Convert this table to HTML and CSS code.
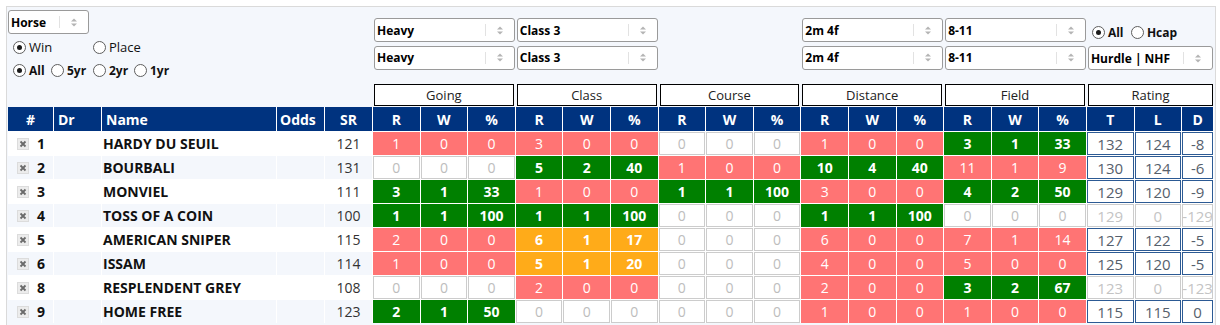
FILE: index.html
```html
<!DOCTYPE html>
<html>
<head>
<meta charset="utf-8">
<link rel="stylesheet" href="styles.css">
</head>
<body>
<div class="panel">
  <div class="top">
    <div class="left">
      <div class="sel sel-horse"><span class="sel-t">Horse</span><span class="sel-arr"><svg width="6" height="9" viewBox="0 0 6 9"><polygon points="0,3.5 3,0.5 6,3.5" /><polygon points="0,5.5 3,8.5 6,5.5" /></svg></span></div>
      <div class="opt-row">
        <label class="opt opt-win"><span class="rb on"></span>Win</label>
        <label class="opt"><span class="rb"></span>Place</label>
      </div>
      <div class="opt-row small">
        <label class="opt w38"><span class="rb on"></span>All</label>
        <label class="opt w42"><span class="rb"></span>5yr</label>
        <label class="opt w41"><span class="rb"></span>2yr</label>
        <label class="opt"><span class="rb"></span>1yr</label>
      </div>
    </div>

    <div class="fgroup col-going">
      <div class="sel"><span class="sel-t">Heavy</span><span class="sel-arr"><svg width="6" height="9" viewBox="0 0 6 9"><polygon points="0,3.5 3,0.5 6,3.5" /><polygon points="0,5.5 3,8.5 6,5.5" /></svg></span></div>
      <div class="sel"><span class="sel-t">Heavy</span><span class="sel-arr"><svg width="6" height="9" viewBox="0 0 6 9"><polygon points="0,3.5 3,0.5 6,3.5" /><polygon points="0,5.5 3,8.5 6,5.5" /></svg></span></div>
    </div>
    <div class="fgroup col-class">
      <div class="sel"><span class="sel-t">Class 3</span><span class="sel-arr"><svg width="6" height="9" viewBox="0 0 6 9"><polygon points="0,3.5 3,0.5 6,3.5" /><polygon points="0,5.5 3,8.5 6,5.5" /></svg></span></div>
      <div class="sel"><span class="sel-t">Class 3</span><span class="sel-arr"><svg width="6" height="9" viewBox="0 0 6 9"><polygon points="0,3.5 3,0.5 6,3.5" /><polygon points="0,5.5 3,8.5 6,5.5" /></svg></span></div>
    </div>
    <div class="fgroup col-dist">
      <div class="sel"><span class="sel-t">2m 4f</span><span class="sel-arr"><svg width="6" height="9" viewBox="0 0 6 9"><polygon points="0,3.5 3,0.5 6,3.5" /><polygon points="0,5.5 3,8.5 6,5.5" /></svg></span></div>
      <div class="sel"><span class="sel-t">2m 4f</span><span class="sel-arr"><svg width="6" height="9" viewBox="0 0 6 9"><polygon points="0,3.5 3,0.5 6,3.5" /><polygon points="0,5.5 3,8.5 6,5.5" /></svg></span></div>
    </div>
    <div class="fgroup col-field">
      <div class="sel"><span class="sel-t">8-11</span><span class="sel-arr"><svg width="6" height="9" viewBox="0 0 6 9"><polygon points="0,3.5 3,0.5 6,3.5" /><polygon points="0,5.5 3,8.5 6,5.5" /></svg></span></div>
      <div class="sel"><span class="sel-t">8-11</span><span class="sel-arr"><svg width="6" height="9" viewBox="0 0 6 9"><polygon points="0,3.5 3,0.5 6,3.5" /><polygon points="0,5.5 3,8.5 6,5.5" /></svg></span></div>
    </div>
    <div class="fgroup col-rating">
      <div class="opt-row small rating-opts">
        <label class="opt w39"><span class="rb on"></span>All</label>
        <label class="opt"><span class="rb"></span>Hcap</label>
      </div>
      <div class="sel"><span class="sel-t">Hurdle | NHF</span><span class="sel-arr"><svg width="6" height="9" viewBox="0 0 6 9"><polygon points="0,3.5 3,0.5 6,3.5" /><polygon points="0,5.5 3,8.5 6,5.5" /></svg></span></div>
    </div>

    <div class="gbox col-going">Going</div>
    <div class="gbox col-class">Class</div>
    <div class="gbox col-course">Course</div>
    <div class="gbox col-dist">Distance</div>
    <div class="gbox col-field">Field</div>
    <div class="gbox col-rating last">Rating</div>
  </div>

  <div class="grid">
    <div class="h">#</div><div class="h l">Dr</div><div class="h l">Name</div><div class="h l odds">Odds</div><div class="h">SR</div>
    <div class="h">R</div><div class="h">W</div><div class="h">%</div>
    <div class="h">R</div><div class="h">W</div><div class="h">%</div>
    <div class="h">R</div><div class="h">W</div><div class="h">%</div>
    <div class="h">R</div><div class="h">W</div><div class="h">%</div>
    <div class="h">R</div><div class="h">W</div><div class="h">%</div>
    <div class="h">T</div><div class="h">L</div><div class="h">D</div>

    <!-- row 1 -->
    <div class="c num"><span class="xi"><svg width="12" height="12" viewBox="0 0 12 12"><rect x="0.5" y="0.5" width="11" height="11" fill="#ececec" stroke="#dcdcdc"/><path d="M3.5 3.5 L8.5 8.5 M8.5 3.5 L3.5 8.5" stroke="#6a6a6a" stroke-width="1.8"/></svg></span>1</div>
    <div class="c"></div><div class="c name">HARDY DU SEUIL</div><div class="c"></div><div class="c sr">121</div>
    <div class="c p">1</div><div class="c p">0</div><div class="c p">0</div>
    <div class="c p">3</div><div class="c p">0</div><div class="c p">0</div>
    <div class="c z">0</div><div class="c z">0</div><div class="c z">0</div>
    <div class="c p">1</div><div class="c p">0</div><div class="c p">0</div>
    <div class="c g">3</div><div class="c g">1</div><div class="c g">33</div>
    <div class="c rt">132</div><div class="c rt">124</div><div class="c rt">-8</div>

    <!-- row 2 -->
    <div class="c num alt"><span class="xi"><svg width="12" height="12" viewBox="0 0 12 12"><rect x="0.5" y="0.5" width="11" height="11" fill="#ececec" stroke="#dcdcdc"/><path d="M3.5 3.5 L8.5 8.5 M8.5 3.5 L3.5 8.5" stroke="#6a6a6a" stroke-width="1.8"/></svg></span>2</div>
    <div class="c alt"></div><div class="c name alt">BOURBALI</div><div class="c alt"></div><div class="c sr alt">131</div>
    <div class="c z">0</div><div class="c z">0</div><div class="c z">0</div>
    <div class="c g">5</div><div class="c g">2</div><div class="c g">40</div>
    <div class="c p">1</div><div class="c p">0</div><div class="c p">0</div>
    <div class="c g">10</div><div class="c g">4</div><div class="c g">40</div>
    <div class="c p">11</div><div class="c p">1</div><div class="c p">9</div>
    <div class="c rt">130</div><div class="c rt">124</div><div class="c rt">-6</div>

    <!-- row 3 -->
    <div class="c num"><span class="xi"><svg width="12" height="12" viewBox="0 0 12 12"><rect x="0.5" y="0.5" width="11" height="11" fill="#ececec" stroke="#dcdcdc"/><path d="M3.5 3.5 L8.5 8.5 M8.5 3.5 L3.5 8.5" stroke="#6a6a6a" stroke-width="1.8"/></svg></span>3</div>
    <div class="c"></div><div class="c name">MONVIEL</div><div class="c"></div><div class="c sr">111</div>
    <div class="c g">3</div><div class="c g">1</div><div class="c g">33</div>
    <div class="c p">1</div><div class="c p">0</div><div class="c p">0</div>
    <div class="c g">1</div><div class="c g">1</div><div class="c g">100</div>
    <div class="c p">3</div><div class="c p">0</div><div class="c p">0</div>
    <div class="c g">4</div><div class="c g">2</div><div class="c g">50</div>
    <div class="c rt">129</div><div class="c rt">120</div><div class="c rt">-9</div>

    <!-- row 4 -->
    <div class="c num alt"><span class="xi"><svg width="12" height="12" viewBox="0 0 12 12"><rect x="0.5" y="0.5" width="11" height="11" fill="#ececec" stroke="#dcdcdc"/><path d="M3.5 3.5 L8.5 8.5 M8.5 3.5 L3.5 8.5" stroke="#6a6a6a" stroke-width="1.8"/></svg></span>4</div>
    <div class="c alt"></div><div class="c name alt">TOSS OF A COIN</div><div class="c alt"></div><div class="c sr alt">100</div>
    <div class="c g">1</div><div class="c g">1</div><div class="c g">100</div>
    <div class="c g">1</div><div class="c g">1</div><div class="c g">100</div>
    <div class="c z">0</div><div class="c z">0</div><div class="c z">0</div>
    <div class="c g">1</div><div class="c g">1</div><div class="c g">100</div>
    <div class="c z">0</div><div class="c z">0</div><div class="c z">0</div>
    <div class="c rg">129</div><div class="c rg">0</div><div class="c rg">-129</div>

    <!-- row 5 -->
    <div class="c num"><span class="xi"><svg width="12" height="12" viewBox="0 0 12 12"><rect x="0.5" y="0.5" width="11" height="11" fill="#ececec" stroke="#dcdcdc"/><path d="M3.5 3.5 L8.5 8.5 M8.5 3.5 L3.5 8.5" stroke="#6a6a6a" stroke-width="1.8"/></svg></span>5</div>
    <div class="c"></div><div class="c name">AMERICAN SNIPER</div><div class="c"></div><div class="c sr">115</div>
    <div class="c p">2</div><div class="c p">0</div><div class="c p">0</div>
    <div class="c o">6</div><div class="c o">1</div><div class="c o">17</div>
    <div class="c z">0</div><div class="c z">0</div><div class="c z">0</div>
    <div class="c p">6</div><div class="c p">0</div><div class="c p">0</div>
    <div class="c p">7</div><div class="c p">1</div><div class="c p">14</div>
    <div class="c rt">127</div><div class="c rt">122</div><div class="c rt">-5</div>

    <!-- row 6 -->
    <div class="c num alt"><span class="xi"><svg width="12" height="12" viewBox="0 0 12 12"><rect x="0.5" y="0.5" width="11" height="11" fill="#ececec" stroke="#dcdcdc"/><path d="M3.5 3.5 L8.5 8.5 M8.5 3.5 L3.5 8.5" stroke="#6a6a6a" stroke-width="1.8"/></svg></span>6</div>
    <div class="c alt"></div><div class="c name alt">ISSAM</div><div class="c alt"></div><div class="c sr alt">114</div>
    <div class="c p">1</div><div class="c p">0</div><div class="c p">0</div>
    <div class="c o">5</div><div class="c o">1</div><div class="c o">20</div>
    <div class="c z">0</div><div class="c z">0</div><div class="c z">0</div>
    <div class="c p">4</div><div class="c p">0</div><div class="c p">0</div>
    <div class="c p">5</div><div class="c p">0</div><div class="c p">0</div>
    <div class="c rt">125</div><div class="c rt">120</div><div class="c rt">-5</div>

    <!-- row 7 -->
    <div class="c num"><span class="xi"><svg width="12" height="12" viewBox="0 0 12 12"><rect x="0.5" y="0.5" width="11" height="11" fill="#ececec" stroke="#dcdcdc"/><path d="M3.5 3.5 L8.5 8.5 M8.5 3.5 L3.5 8.5" stroke="#6a6a6a" stroke-width="1.8"/></svg></span>8</div>
    <div class="c"></div><div class="c name">RESPLENDENT GREY</div><div class="c"></div><div class="c sr">108</div>
    <div class="c z">0</div><div class="c z">0</div><div class="c z">0</div>
    <div class="c p">2</div><div class="c p">0</div><div class="c p">0</div>
    <div class="c z">0</div><div class="c z">0</div><div class="c z">0</div>
    <div class="c p">2</div><div class="c p">0</div><div class="c p">0</div>
    <div class="c g">3</div><div class="c g">2</div><div class="c g">67</div>
    <div class="c rg">123</div><div class="c rg">0</div><div class="c rg">-123</div>

    <!-- row 8 -->
    <div class="c num alt"><span class="xi"><svg width="12" height="12" viewBox="0 0 12 12"><rect x="0.5" y="0.5" width="11" height="11" fill="#ececec" stroke="#dcdcdc"/><path d="M3.5 3.5 L8.5 8.5 M8.5 3.5 L3.5 8.5" stroke="#6a6a6a" stroke-width="1.8"/></svg></span>9</div>
    <div class="c alt"></div><div class="c name alt">HOME FREE</div><div class="c alt"></div><div class="c sr alt">123</div>
    <div class="c g">2</div><div class="c g">1</div><div class="c g">50</div>
    <div class="c z">0</div><div class="c z">0</div><div class="c z">0</div>
    <div class="c z">0</div><div class="c z">0</div><div class="c z">0</div>
    <div class="c p">1</div><div class="c p">0</div><div class="c p">0</div>
    <div class="c p">1</div><div class="c p">0</div><div class="c p">0</div>
    <div class="c rt">115</div><div class="c rt">115</div><div class="c rt">0</div>
  </div>
</div>
</body>
</html>
```

FILE: styles.css
```css
html, body {
  margin: 0;
  padding: 0;
  background: #fff;
}
body {
  font-family: "Open Sans", "Noto Sans", "Liberation Sans", sans-serif;
  color: #111;
}
.panel {
  --cols: 45px 47px 174px 47px 47px repeat(17, 46.6px) 31px;
  margin: 6px 0 0 6px;
  width: 1210px;
  height: 330px;
  box-sizing: border-box;
  border: 1px solid #dadada;
  background: #f4f7fc;
  padding: 0 1px;
}
.top {
  display: grid;
  grid-template-columns: var(--cols);
  grid-template-rows: 77px 22px;
  column-gap: 1px;
  row-gap: 0;
  margin-bottom: 1px;
}
.left {
  grid-column: 1 / 6;
  grid-row: 1;
  padding-top: 3px;
}
.col-going { grid-column: 6 / span 3; }
.col-class { grid-column: 9 / span 3; }
.col-course { grid-column: 12 / span 3; }
.col-dist { grid-column: 15 / span 3; }
.col-field { grid-column: 18 / span 3; }
.col-rating { grid-column: 21 / span 3; }

.fgroup {
  grid-row: 1;
  padding: 11px 0 0 1px;
  display: flex;
  flex-direction: column;
  gap: 3.5px;
}
.fgroup.col-rating {
  padding-top: 16px;
  gap: 5px;
}
.sel {
  height: 24px;
  box-sizing: border-box;
  border: 1px solid #9a9a9a;
  border-radius: 3px;
  background: #fff;
  display: flex;
  align-items: stretch;
  font-size: 12px;
  font-weight: bold;
  color: #000;
  padding-left: 2px;
}
.sel-t {
  flex: 1;
  display: flex;
  align-items: center;
  white-space: nowrap;
}
.sel-arr {
  width: 28px;
  margin: 5px 0;
  border-left: 1px solid #e2e2e2;
  display: flex;
  align-items: center;
  justify-content: center;
}
.sel-arr svg { fill: #b4b4b4; display: block; }
.sel-horse {
  width: 81px;
}

.opt-row {
  display: flex;
  align-items: center;
  height: 18px;
  margin-top: 4px;
  padding-left: 5px;
  font-size: 13px;
  color: #111;
}
.opt-row.small {
  margin-top: 5px;
  font-size: 12px;
  font-weight: bold;
}
.opt-row.rating-opts {
  margin-top: 0;
  padding-left: 4px;
}
.opt {
  display: flex;
  align-items: center;
  gap: 3px;
  white-space: nowrap;
}
.opt-win { width: 80px; }
.w38 { width: 38px; }
.w39 { width: 39px; }
.w41 { width: 41px; }
.w42 { width: 42px; }
.rb {
  width: 13px;
  height: 13px;
  box-sizing: border-box;
  border: 1px solid #5e5e5e;
  border-radius: 50%;
  background: #fff;
  position: relative;
  flex: none;
}
.rb.on::after {
  content: "";
  position: absolute;
  left: 3px;
  top: 3px;
  width: 5px;
  height: 5px;
  border-radius: 50%;
  background: #1a1a1a;
}

.gbox {
  grid-row: 2;
  margin: 0 1px;
  border: 1px solid #000;
  background: #fff;
  box-sizing: border-box;
  display: flex;
  align-items: center;
  justify-content: center;
  font-size: 13px;
  color: #222;
}
.gbox.last { margin-right: 0; }

.grid {
  display: grid;
  grid-template-columns: var(--cols);
  grid-template-rows: 24px;
  grid-auto-rows: 23px;
  gap: 1px;
  background: #fff;
}
.h {
  background: #00337f;
  color: #fff;
  font-weight: bold;
  font-size: 14px;
  display: flex;
  align-items: center;
  justify-content: center;
}
.h.l {
  justify-content: flex-start;
  padding-left: 4px;
}
.h.odds { padding-left: 3px; }
.c {
  display: flex;
  align-items: center;
  justify-content: center;
  font-size: 14px;
  box-sizing: border-box;
  background: #fff;
  border: 1px solid transparent;
  white-space: nowrap;
}
.c.alt { background: #f4f7fc; }
.num {
  font-weight: bold;
  font-size: 14px;
  color: #111;
  gap: 8px;
  justify-content: flex-start;
  padding-left: 8px;
}
.xi { display: flex; }
.name {
  justify-content: flex-start;
  padding-left: 0;
  font-weight: bold;
  font-size: 14px;
  color: #111;
}
.sr { color: #333; }
.p { background: #ff7474; border-color: #ff7474; color: #fff; }
.g { background: #008000; border-color: #008000; color: #fff; font-weight: bold; }
.o { background: #ffab19; border-color: #ffab19; color: #fff; font-weight: bold; }
.z { background: #fff; border-color: #cccccc; color: #bdbdbd; }
.rt { background: #fff; border-color: #2c5a94; color: #56606c; font-size: 15px; }
.rg { background: #fff; border-color: #cccccc; color: #c4c4c4; font-size: 15px; }
.c:nth-child(23n) { padding: 0; }
```
